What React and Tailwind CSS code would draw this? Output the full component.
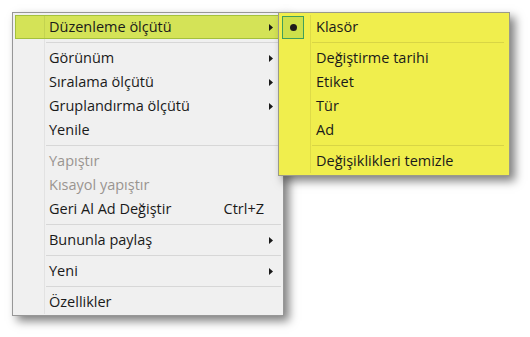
import React from "react";

const Arrow = () => (
  <svg width="4" height="7" viewBox="0 0 4 7" className="block">
    <path d="M0 0 L4 3.5 L0 7 Z" fill="#1a1a1a" />
  </svg>
);

const mainItems = [
  { label: "Düzenleme ölçütü", sub: true, active: true },
  { sep: true },
  { label: "Görünüm", sub: true },
  { label: "Sıralama ölçütü", sub: true },
  { label: "Gruplandırma ölçütü", sub: true },
  { label: "Yenile" },
  { sep: true },
  { label: "Yapıştır", disabled: true },
  { label: "Kısayol yapıştır", disabled: true },
  { label: "Geri Al Ad Değiştir", shortcut: "Ctrl+Z" },
  { sep: true },
  { label: "Bununla paylaş", sub: true },
  { sep: true },
  { label: "Yeni", sub: true },
  { sep: true },
  { label: "Özellikler" },
];

const subItems = [
  { label: "Klasör", checked: true },
  { sep: true },
  { label: "Değiştirme tarihi" },
  { label: "Etiket" },
  { label: "Tür" },
  { label: "Ad" },
  { sep: true },
  { label: "Değişiklikleri temizle" },
];

const MainMenu = () => (
  <div className="w-[272px] border border-[#979797] bg-[#f0f0f0] pt-[2px] pb-[1px] px-[2px] shadow-[5px_5px_9px_rgba(0,0,0,0.5)]">
    {mainItems.map((item, i) => {
      if (item.sep) {
        return (
          <div key={i} className="flex h-[7px]">
            <div className="w-[30px] border-r border-[#e2e2e2]" />
            <div className="flex-1 flex items-center pl-[1px]">
              <div className="h-px w-full bg-[#d7d7d7]" />
            </div>
          </div>
        );
      }
      if (item.active) {
        return (
          <div key={i} className="flex h-[24px] border border-[#a4c13c] bg-[#d4e357]">
            <div className="w-[29px] border-r border-[#c3d350]" />
            <div className="flex-1 flex items-center pl-[4px] pr-[7px] text-[#1a1a1a]">
              <span className="flex-1">{item.label}</span>
              <Arrow />
            </div>
          </div>
        );
      }
      return (
        <div key={i} className="flex h-[24px]">
          <div className="w-[30px] border-r border-[#e2e2e2]" />
          <div
            className={
              "flex-1 flex items-center pl-[4px] pr-[8px] " +
              (item.disabled ? "text-[#9a9590]" : "text-[#1a1a1a]")
            }
          >
            <span className="flex-1">{item.label}</span>
            {item.shortcut && <span className="mr-[9px]">{item.shortcut}</span>}
            {item.sub && <Arrow />}
          </div>
        </div>
      );
    })}
  </div>
);

const SubMenu = () => (
  <div className="w-[232px] border border-[#9a9a8a] bg-[#f0ee4d] pt-[2px] pb-[2px] px-[2px] shadow-[5px_5px_9px_rgba(0,0,0,0.5)]">
    {subItems.map((item, i) => {
      if (item.sep) {
        return (
          <div key={i} className="flex h-[7px]">
            <div className="w-[30px] border-r border-[#dedb48]" />
            <div className="flex-1 flex items-center pl-[1px] pr-[3px]">
              <div className="h-px w-full bg-[#d8d545]" />
            </div>
          </div>
        );
      }
      return (
        <div key={i} className="flex h-[24px]">
          <div className="w-[30px] border-r border-[#dedb48] flex items-center pl-[1px]">
            {item.checked && (
              <div className="w-[22px] h-[23px] border border-[#3f9f5a] bg-[#cde04b] flex items-center justify-center">
                <div className="w-[7px] h-[7px] rounded-full bg-[#1c1c1c]" />
              </div>
            )}
          </div>
          <div className="flex-1 flex items-center pl-[5px] text-[#1a1a1a]">{item.label}</div>
        </div>
      );
    })}
  </div>
);

export default function App() {
  return (
    <div
      className="w-[530px] h-[337px] bg-white text-[14.5px] leading-none"
      style={{ fontFamily: '"Open Sans", "Noto Sans", sans-serif' }}
    >
      <div className="relative ml-[12px] pt-[12px] w-fit">
        <MainMenu />
        <div className="absolute left-[266px] top-[12px]">
          <SubMenu />
        </div>
      </div>
    </div>
  );
}
